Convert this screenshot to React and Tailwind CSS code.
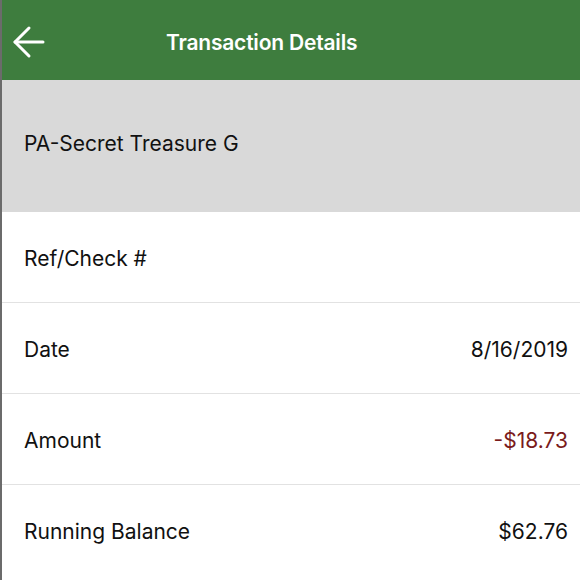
import { ArrowLeft } from 'lucide-react';

const rows = [
  { label: 'Ref/Check #', value: '' },
  { label: 'Date', value: '8/16/2019' },
  { label: 'Amount', value: '-$18.73', negative: true },
  { label: 'Running Balance', value: '$62.76' },
];

const App = () => {
  return (
    <div className="w-[580px] h-[580px] overflow-hidden bg-white border-l-2 border-[#6b6b6b] font-['Inter','Liberation_Sans',sans-serif]">
      {/* Header */}
      <div className="h-[80px] bg-[#3e7d3e] flex items-center relative pl-[164px] pt-[6px]">
        <button className="absolute left-[3px] top-[18px] text-white">
          <ArrowLeft className="w-[48px] h-[48px]" strokeWidth={1.5} />
        </button>
        <h1 className="text-white text-[21px] font-semibold tracking-[-0.2px]">
          Transaction Details
        </h1>
      </div>

      {/* Payee */}
      <div className="h-[132px] bg-[#d9d9d9] flex items-center pl-[22px] pb-[4px]">
        <span className="text-[21px] text-[#111]">PA-Secret Treasure G</span>
      </div>

      {/* Detail rows */}
      {rows.map((row, index) => (
        <div
          key={index}
          className={`h-[91px] flex items-center justify-between pl-[22px] pr-[12px] pt-[3px] ${index < rows.length - 1 ? 'border-b border-[#e2e2e2]' : ''}`}
        >
          <span className="text-[21px] text-[#111]">{row.label}</span>
          <span className={`text-[21px] ${row.negative ? 'text-[#7a1b1b]' : 'text-[#111]'}`}>
            {row.value}
          </span>
        </div>
      ))}
    </div>
  );
};

export default App;
